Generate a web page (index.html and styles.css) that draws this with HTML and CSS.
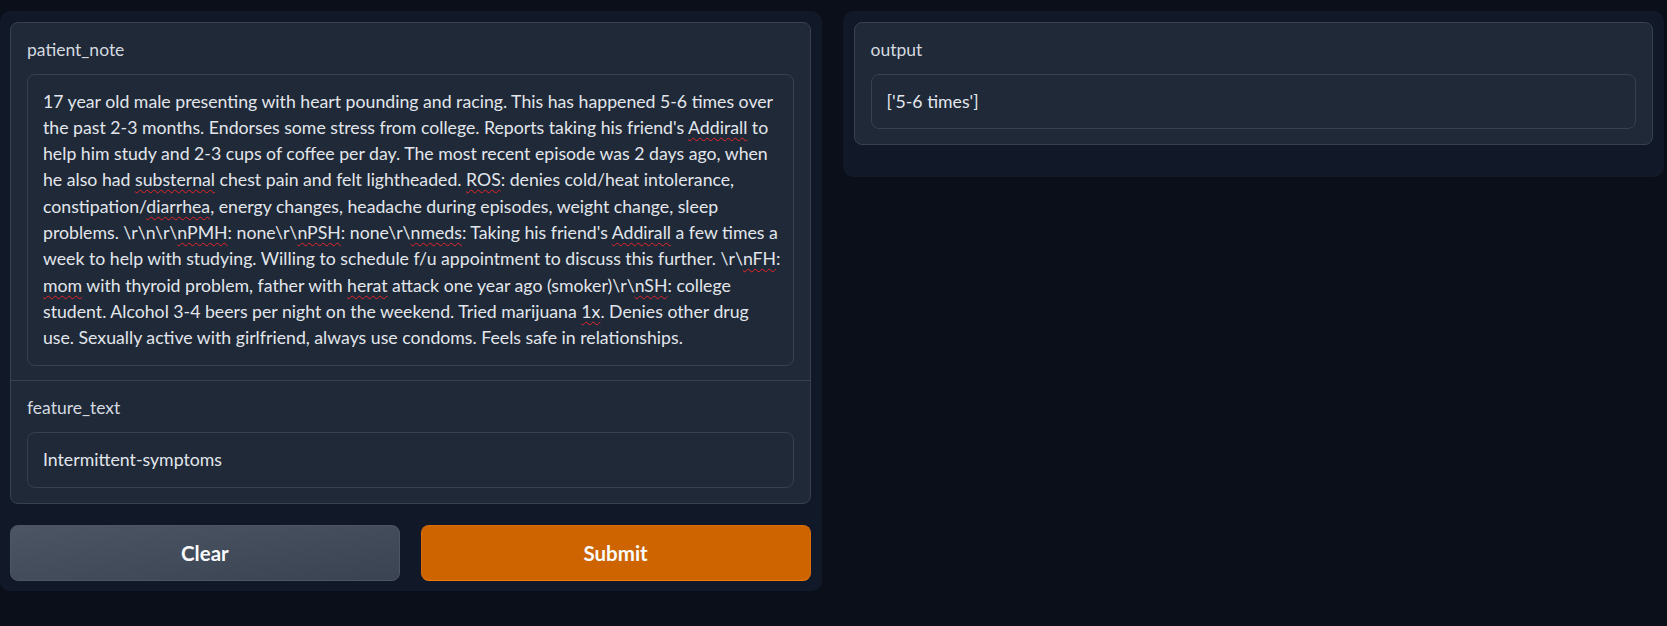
FILE: index.html
```html
<!DOCTYPE html>
<html lang="en">
<head>
<meta charset="utf-8">
<title>patient note</title>
<link rel="stylesheet" href="styles.css">
</head>
<body>
<div class="app">
  <div class="panel panel-left">
    <div class="block">
      <div class="field">
        <div class="label">patient_note</div>
        <div class="textbox multi">
          <span class="ln">17 year old male presenting with heart pounding and racing. This has happened 5-6 times over</span>
          <span class="ln">the past 2-3 months. Endorses some stress from college. Reports taking his friend's <span class="sp">Addirall</span> to</span>
          <span class="ln">help him study and 2-3 cups of coffee per day. The most recent episode was 2 days ago, when</span>
          <span class="ln">he also had <span class="sp">substernal</span> chest pain and felt lightheaded. <span class="sp">ROS</span>: denies cold/heat intolerance,</span>
          <span class="ln">constipation/<span class="sp">diarrhea</span>, energy changes, headache during episodes, weight change, sleep</span>
          <span class="ln">problems. \r\n\r\<span class="sp">nPMH</span>: none\r\<span class="sp">nPSH</span>: none\r\<span class="sp">nmeds</span>: Taking his friend's <span class="sp">Addirall</span> a few times a</span>
          <span class="ln">week to help with studying. Willing to schedule f/u appointment to discuss this further. \r\<span class="sp">nFH</span>:</span>
          <span class="ln"><span class="sp">mom</span> with thyroid problem, father with <span class="sp">herat</span> attack one year ago (smoker)\r\<span class="sp">nSH</span>: college</span>
          <span class="ln">student. Alcohol 3-4 beers per night on the weekend. Tried marijuana <span class="sp">1x</span>. Denies other drug</span>
          <span class="ln">use. Sexually active with girlfriend, always use condoms. Feels safe in relationships.</span>
        </div>
      </div>
      <div class="field">
        <div class="label">feature_text</div>
        <div class="textbox">Intermittent-symptoms</div>
      </div>
    </div>
    <div class="buttons">
      <button class="btn btn-secondary">Clear</button>
      <button class="btn btn-primary">Submit</button>
    </div>
  </div>
  <div class="panel panel-right">
    <div class="block">
      <div class="field">
        <div class="label">output</div>
        <div class="textbox">['5-6 times']</div>
      </div>
    </div>
  </div>
</div>
</body>
</html>
```
FILE: styles.css
```css
* { box-sizing: border-box; }

html, body {
  margin: 0;
  background: #0b0f19;
}

body {
  font-family: Lato, "Open Sans", sans-serif;
  color: #e2e6ec;
}

.app {
  display: grid;
  grid-template-columns: minmax(0, 1fr) minmax(0, 1fr);
  column-gap: 21px;
  align-items: start;
  padding: 11px 3px 0 0;
}

.panel {
  background: #111827;
  border-radius: 10px;
  display: flex;
  flex-direction: column;
  min-width: 0;
}

.panel-left {
  padding: 11px 11px 10px 10px;
  gap: 21px;
}

.panel-right {
  padding: 11px 11px 32px 11px;
}

.block {
  background: #1f2937;
  border: 1px solid #374151;
  border-radius: 8px;
  display: flex;
  flex-direction: column;
  overflow: hidden;
}

.field {
  padding: 16px 16px 14.5px;
  min-width: 0;
}

.field + .field {
  border-top: 1px solid #374151;
  padding-bottom: 15px;
}

.label {
  font-size: 17.5px;
  line-height: 22px;
  color: #d5d9e0;
  margin-bottom: 13px;
}

.textbox {
  background: #1f2937;
  border: 1px solid #374151;
  border-radius: 8px;
  padding: 13.5px 15px;
  font-size: 17.7px;
  line-height: 26.3px;
  color: #e2e6ec;
  white-space: nowrap;
  overflow: hidden;
}

.multi .ln {
  display: block;
}

.sp {
  text-decoration: underline wavy #e5252a;
  text-decoration-thickness: 1px;
  text-underline-offset: 3px;
  text-decoration-skip-ink: none;
}

.buttons {
  display: grid;
  grid-template-columns: minmax(0, 1fr) minmax(0, 1fr);
  column-gap: 21px;
}

.btn {
  height: 56px;
  border-radius: 8px;
  font-family: Lato, "Open Sans", sans-serif;
  font-size: 20.5px;
  font-weight: 700;
  color: #f9fafb;
  cursor: pointer;
}

.btn-secondary {
  background: linear-gradient(to bottom right, #4b5563, #3a4352);
  border: 1px solid #4b5563;
}

.btn-primary {
  background: #cd6400;
  border: 1px solid #d96c06;
  border-bottom-color: #f07a12;
}
```
